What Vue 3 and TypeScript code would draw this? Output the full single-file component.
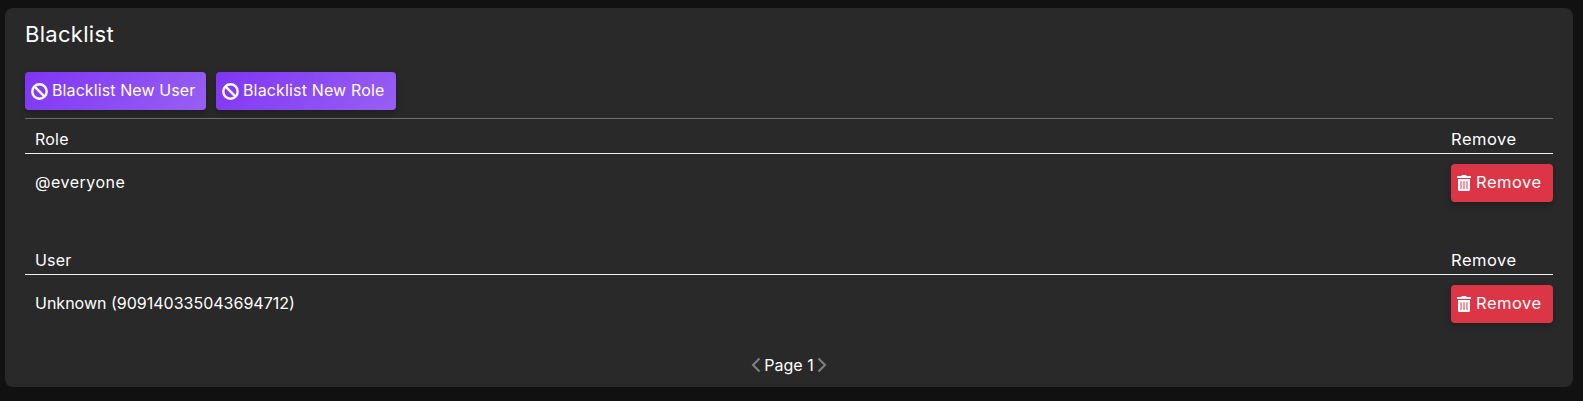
<script setup lang="ts">
const tables = [
  { head: 'Role', rows: ['@everyone'], cls: 'row-role' },
  { head: 'User', rows: ['Unknown (909140335043694712)'], cls: 'row-user' },
]
const actions = ['Blacklist New User', 'Blacklist New Role']
const trash = 'M32 464a48 48 0 0 0 48 48h288a48 48 0 0 0 48-48V128H32zm272-256a16 16 0 0 1 32 0v224a16 16 0 0 1-32 0zm-96 0a16 16 0 0 1 32 0v224a16 16 0 0 1-32 0zm-96 0a16 16 0 0 1 32 0v224a16 16 0 0 1-32 0zM432 32H312l-9.4-18.7A24 24 0 0 0 281.1 0H166.8a23.72 23.72 0 0 0-21.4 13.3L136 32H16A16 16 0 0 0 0 48v32a16 16 0 0 0 16 16h416a16 16 0 0 0 16-16V48a16 16 0 0 0-16-16z'
</script>

<template>
  <main class="page">
    <section class="panel">
      <h2 class="title">Blacklist</h2>
      <div class="actions">
        <button v-for="a in actions" :key="a" class="btn purple">
          <svg class="ban" viewBox="0 0 17 17" fill="none" stroke="#fff" stroke-width="2.4">
            <circle cx="8.5" cy="8.5" r="7.2" />
            <path d="M3.4 3.4l10.2 10.2" />
          </svg>
          <span class="label">{{ a }}</span>
        </button>
      </div>
      <hr class="rule" />
      <div v-for="t in tables" :key="t.head" class="table">
        <div class="head">
          <span>{{ t.head }}</span>
          <span class="remove-col">Remove</span>
        </div>
        <div v-for="r in t.rows" :key="r" class="row" :class="t.cls">
          <span class="label">{{ r }}</span>
          <button class="btn red">
            <svg class="trash" viewBox="0 0 448 512" fill="#fff"><path :d="trash" /></svg>
            <span class="label">Remove</span>
          </button>
        </div>
      </div>
      <nav class="pager">
        <svg class="chev" viewBox="0 0 10 16" fill="none" stroke="#808080" stroke-width="2"><path d="M8.5 1.5L2 8l6.5 6.5" /></svg>
        <span>Page 1</span>
        <svg class="chev" viewBox="0 0 10 16" fill="none" stroke="#808080" stroke-width="2"><path d="M1.5 1.5L8 8l-6.5 6.5" /></svg>
      </nav>
    </section>
  </main>
</template>

<style>
html, body { margin: 0; background: #111111; }
</style>

<style scoped>
.page {
  height: 401px;
  box-sizing: border-box;
  padding: 8px 10px 0 5px;
  background: #111111;
  font-family: Inter, "Noto Sans", sans-serif;
  color: #fff;
  font-size: 16px;
  font-weight: 400;
}
.panel {
  height: 379px;
  box-sizing: border-box;
  padding: 12px 20px 0;
  background: #292929;
  border-radius: 8px;
}
.title {
  margin: 0;
  font-size: 22px;
  font-weight: 400;
  line-height: 28px;
  letter-spacing: 0.3px;
}
.actions {
  display: flex;
  gap: 10px;
  margin-top: 24px;
}
.btn {
  display: flex;
  align-items: center;
  height: 38px;
  box-sizing: border-box;
  border: 0;
  border-radius: 4px;
  color: #fff;
  font: inherit;
  box-shadow: 0 3px 6px rgba(0, 0, 0, 0.25);
}
.label { padding-bottom: 2px; }
.purple {
  width: 181px;
  padding: 0 0 0 6px;
  gap: 4px;
  background: linear-gradient(135deg, #7f35f5, #9760f2);
  letter-spacing: 0.1px;
}
.purple + .purple { width: 180px; letter-spacing: 0.15px; }
.ban { width: 17px; height: 17px; flex: none; }
.red {
  width: 102px;
  padding: 0 0 0 6px;
  gap: 5px;
  background: #dc3545;
  font-size: 16.5px;
  letter-spacing: 0.5px;
}
.trash { width: 14px; height: 16px; flex: none; }
.rule {
  margin: 8px 0 0;
  border: 0;
  height: 1px;
  background: #6e6e6e;
}
.table + .table { margin-top: 28px; }
.head {
  display: flex;
  justify-content: space-between;
  height: 35px;
  box-sizing: border-box;
  padding: 9px 10px 0;
  line-height: 22px;
  border-bottom: 1px solid #eeeeee;
  letter-spacing: 0.2px;
}
.remove-col { width: 92px; font-size: 16.5px; letter-spacing: 0.5px; }
.row {
  display: flex;
  justify-content: space-between;
  align-items: center;
  padding: 10px 0 10px 10px;
}
.row-role { letter-spacing: 0.5px; }
.row-user { letter-spacing: 0; }
.pager {
  display: flex;
  justify-content: center;
  align-items: center;
  gap: 3px;
  margin-top: 21px;
  height: 22px;
}
.chev { width: 10px; height: 16px; }
</style>
